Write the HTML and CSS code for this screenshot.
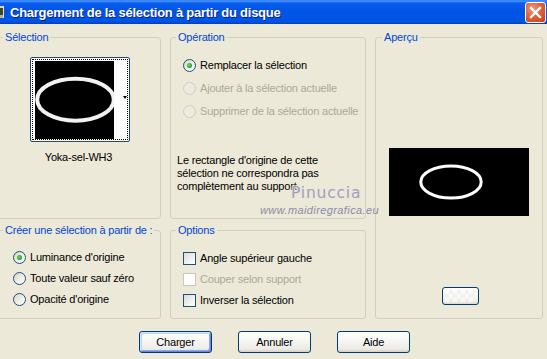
FILE: index.html
```html
<!DOCTYPE html>
<html lang="fr">
<head>
<meta charset="utf-8">
<title>Chargement de la sélection à partir du disque</title>
<link rel="stylesheet" href="styles.css">
</head>
<body>
<div class="window">
  <div class="titlebar">
    <span class="app-icon"></span>
    <span class="title">Chargement de la sélection à partir du disque</span>
    <button class="close" aria-label="Fermer">
      <svg width="13" height="13" viewBox="0 0 13 13"><path d="M2 2 L11 11 M11 2 L2 11" stroke="#fff" stroke-width="2.4" stroke-linecap="square"/></svg>
    </button>
  </div>

  <div class="content">
    <fieldset class="group g-selection">
      <legend>Sélection</legend>
      <div class="sel-body">
        <div class="thumb">
          <div class="thumb-focus">
            <svg class="thumb-img" width="79" height="78" viewBox="0 0 79 78">
              <rect width="79" height="78" fill="#000"/>
              <ellipse cx="40.5" cy="38.7" rx="38.3" ry="21" fill="none" stroke="#F2F2F2" stroke-width="4"/>
            </svg>
            <div class="thumb-strip"><span class="arrow"></span></div>
          </div>
        </div>
        <div class="thumb-label">Yoka-sel-WH3</div>
      </div>
    </fieldset>

    <fieldset class="group g-operation">
      <legend>Opération</legend>
      <div class="op-body">
        <div class="rows rows-op">
          <div class="row"><span class="radio checked"></span><span>Remplacer la sélection</span></div>
          <div class="row disabled"><span class="radio"></span><span>Ajouter à la sélection actuelle</span></div>
          <div class="row disabled"><span class="radio"></span><span>Supprimer de la sélection actuelle</span></div>
        </div>
        <p class="note">Le rectangle d'origine de cette<br>sélection ne correspondra pas<br>complètement au support.</p>
      </div>
    </fieldset>

    <fieldset class="group g-apercu">
      <legend>Aperçu</legend>
      <div class="ap-body">
        <svg class="preview" width="140" height="68" viewBox="0 0 140 68">
          <rect width="140" height="68" fill="#000"/>
          <ellipse cx="62" cy="34" rx="30.2" ry="16" fill="none" stroke="#fff" stroke-width="3"/>
        </svg>
        <button class="mini-btn" aria-label="Couleur"><span class="checker"></span></button>
      </div>
    </fieldset>

    <fieldset class="group g-creer">
      <legend>Créer une sélection à partir de :</legend>
      <div class="rows rows-creer">
        <div class="row"><span class="radio checked"></span><span>Luminance d'origine</span></div>
        <div class="row"><span class="radio"></span><span>Toute valeur sauf zéro</span></div>
        <div class="row"><span class="radio"></span><span>Opacité d'origine</span></div>
      </div>
    </fieldset>

    <fieldset class="group g-options">
      <legend>Options</legend>
      <div class="rows rows-options">
        <div class="row"><span class="check"></span><span>Angle supérieur gauche</span></div>
        <div class="row disabled"><span class="check"></span><span>Couper selon support</span></div>
        <div class="row"><span class="check"></span><span>Inverser la sélection</span></div>
      </div>
    </fieldset>
  </div>

  <div class="buttons">
    <button class="btn default">Charger</button>
    <button class="btn">Annuler</button>
    <button class="btn">Aide</button>
  </div>

  <div class="wm-name">Pinuccia</div>
  <div class="wm-url">www.maidiregrafica.eu</div>
</div>
</body>
</html>
```

FILE: styles.css
```css
* { box-sizing: border-box; }

html, body {
  margin: 0;
  padding: 0;
}

body {
  background: #ECE9D8;
  font-family: "Liberation Sans", Arial, sans-serif;
  font-size: 11px;
  letter-spacing: -0.2px;
  color: #000;
}

.window {
  position: relative;
  width: 547px;
  height: 359px;
  overflow: hidden;
  background: #ECE9D8;
}

/* ---------- title bar ---------- */
.titlebar {
  height: 24px;
  display: flex;
  align-items: center;
  background: linear-gradient(to bottom, #2A7BF5 0%, #4B97FF 5%, #0A5DEE 12%, #0054E3 45%, #0055E8 80%, #0152DD 92%, #003FB8 100%);
}

.app-icon {
  width: 4px;
  height: 12px;
  margin-right: 6px;
  align-self: center;
  background: linear-gradient(to bottom, #D8D2C0 0 2px, #3C4A2A 2px 9px, #B9B39F 9px);
  border-right: 1px solid #E8E4D8;
}

.title {
  flex: 1;
  color: #fff;
  font-weight: bold;
  font-size: 13px;
  letter-spacing: -0.25px;
  white-space: nowrap;
  text-shadow: 1px 1px 0 #0A1E8A;
}

.close {
  width: 21px;
  height: 21px;
  margin-right: 1px;
  padding: 0;
  border: 1px solid #fff;
  border-radius: 3px;
  background: radial-gradient(circle at 35% 30%, #F29A7E 0%, #E4603A 45%, #D2461C 85%, #C03A14 100%);
  display: flex;
  align-items: center;
  justify-content: center;
}

/* ---------- group boxes ---------- */
.content {
  display: grid;
  grid-template-columns: 165px 196px 168px;
  grid-template-rows: 188px 95px;
  column-gap: 9px;
  row-gap: 5px;
  margin-left: -4px;
  padding-top: 7px;
}

.group {
  margin: 0;
  padding: 0;
  min-width: 0;
  border: 1px solid #D0D0BF;
  border-radius: 3px;
}

.group legend {
  margin-left: 6px;
  padding: 0 2px;
  color: #0046D5;
  font-size: 11px;
  line-height: 13px;
  white-space: nowrap;
}

.g-selection { grid-column: 1; grid-row: 1; }
.g-operation { grid-column: 2; grid-row: 1; }
.g-apercu { grid-column: 3; grid-row: 1 / 3; }
.g-creer { grid-column: 1; grid-row: 2; }
.g-options { grid-column: 2; grid-row: 2; }

.g-operation legend,
.g-options legend { margin-left: 5px; }

/* ---------- selection thumbnail ---------- */
.sel-body {
  display: flex;
  flex-direction: column;
  align-items: center;
  padding-top: 13px;
}

.thumb {
  width: 100px;
  height: 85px;
  margin-left: 3px;
  border: 1px solid #23477A;
  border-radius: 2px;
  padding: 1px;
  background: #fff;
}

.thumb-focus {
  display: flex;
  height: 100%;
  border: 1px dotted #000;
  padding: 1px 0 1px 2px;
}

.thumb-img { display: block; flex: none; }

.thumb-strip {
  flex: 1;
  display: flex;
  align-items: center;
  justify-content: flex-end;
  background: #fff;
  padding-bottom: 4px;
}

.arrow {
  width: 0;
  height: 0;
  border-left: 2.5px solid transparent;
  border-right: 2.5px solid transparent;
  border-top: 3px solid #000;
}

.thumb-label {
  margin-top: 9px;
  line-height: 13px;
}

/* ---------- rows ---------- */
.rows {
  display: flex;
  flex-direction: column;
}

.row {
  height: 16px;
  display: flex;
  align-items: center;
  gap: 4px;
  white-space: nowrap;
}

.row.disabled { color: #ACA899; }

.rows-op { padding: 13px 0 0 12px; gap: 7px; }
.rows-creer { padding: 12px 0 0 16px; gap: 5px; }
.rows-options { padding: 13px 0 0 12px; gap: 5px; }

.radio {
  width: 13px;
  height: 13px;
  flex: none;
  border-radius: 50%;
  border: 1px solid #1C5180;
  background: linear-gradient(135deg, #D6D2C4 0%, #EEEDE6 50%, #FFFFFF 100%);
  display: flex;
  align-items: center;
  justify-content: center;
}

.radio.checked::after {
  content: "";
  width: 5px;
  height: 5px;
  border-radius: 50%;
  background: radial-gradient(circle at 40% 40%, #6BDB6B 0%, #2BAA2B 55%, #168A16 100%);
}

.row.disabled .radio {
  border-color: #CFCCBF;
  background: #ECEADF;
}

.check {
  width: 13px;
  height: 13px;
  flex: none;
  border: 1px solid #1C5180;
  background: linear-gradient(135deg, #DCDCD4 0%, #F2F2EE 60%, #FFFFFF 100%);
}

.row.disabled .check {
  border-color: #CAC8BB;
  background: #fff;
}

.note {
  margin: 35px 0 0 6px;
  line-height: 13px;
}

/* ---------- preview ---------- */
.ap-body {
  display: flex;
  flex-direction: column;
  align-items: center;
  padding-top: 104px;
}

.preview { display: block; }

.mini-btn {
  width: 37px;
  height: 18px;
  margin: 71px 0 0 3px;
  padding: 2px;
  border: 1px solid #003C74;
  border-radius: 3px;
  background: linear-gradient(#FFFFFF, #F0F0EA 80%, #DCD8CC);
}

.checker {
  display: block;
  width: 100%;
  height: 100%;
  background: repeating-conic-gradient(#EDEDED 0 25%, #FCFCFC 0 50%) 0 0 / 8px 8px;
  opacity: 0.7;
}

/* ---------- buttons ---------- */
.buttons {
  display: flex;
  gap: 26px;
  padding: 12px 0 0 139px;
}

.btn {
  width: 73px;
  height: 22px;
  padding: 0;
  font-family: "Liberation Sans", Arial, sans-serif;
  font-size: 11px;
  letter-spacing: -0.2px;
  color: #000;
  border: 1px solid #003C74;
  border-radius: 3px;
  background: linear-gradient(to bottom, #FFFFFF 0%, #F7F7F4 40%, #ECEBE6 85%, #D6D0C5 100%);
}

.btn.default {
  box-shadow: inset 1px 1px 0 #CEE7FF, inset -1px -1px 0 #6982EE, inset 2px 2px 0 #BCD4F6, inset -2px -2px 0 #89ADE4;
}

/* ---------- watermark overlay ---------- */
.wm-name {
  position: absolute;
  left: 291px;
  top: 184px;
  font-family: "DejaVu Sans", sans-serif;
  font-size: 15.5px;
  line-height: 18px;
  letter-spacing: 0.8px;
  color: #A09EBF;
  text-shadow: 0 0 2px #ECE9D8, 0 0 2px #ECE9D8, 0 0 3px #ECE9D8;
}

.wm-url {
  position: absolute;
  left: 260px;
  top: 204px;
  font-family: "Liberation Sans", sans-serif;
  font-style: italic;
  font-size: 11px;
  line-height: 13px;
  letter-spacing: 0.4px;
  color: #8B89A6;
}
```
